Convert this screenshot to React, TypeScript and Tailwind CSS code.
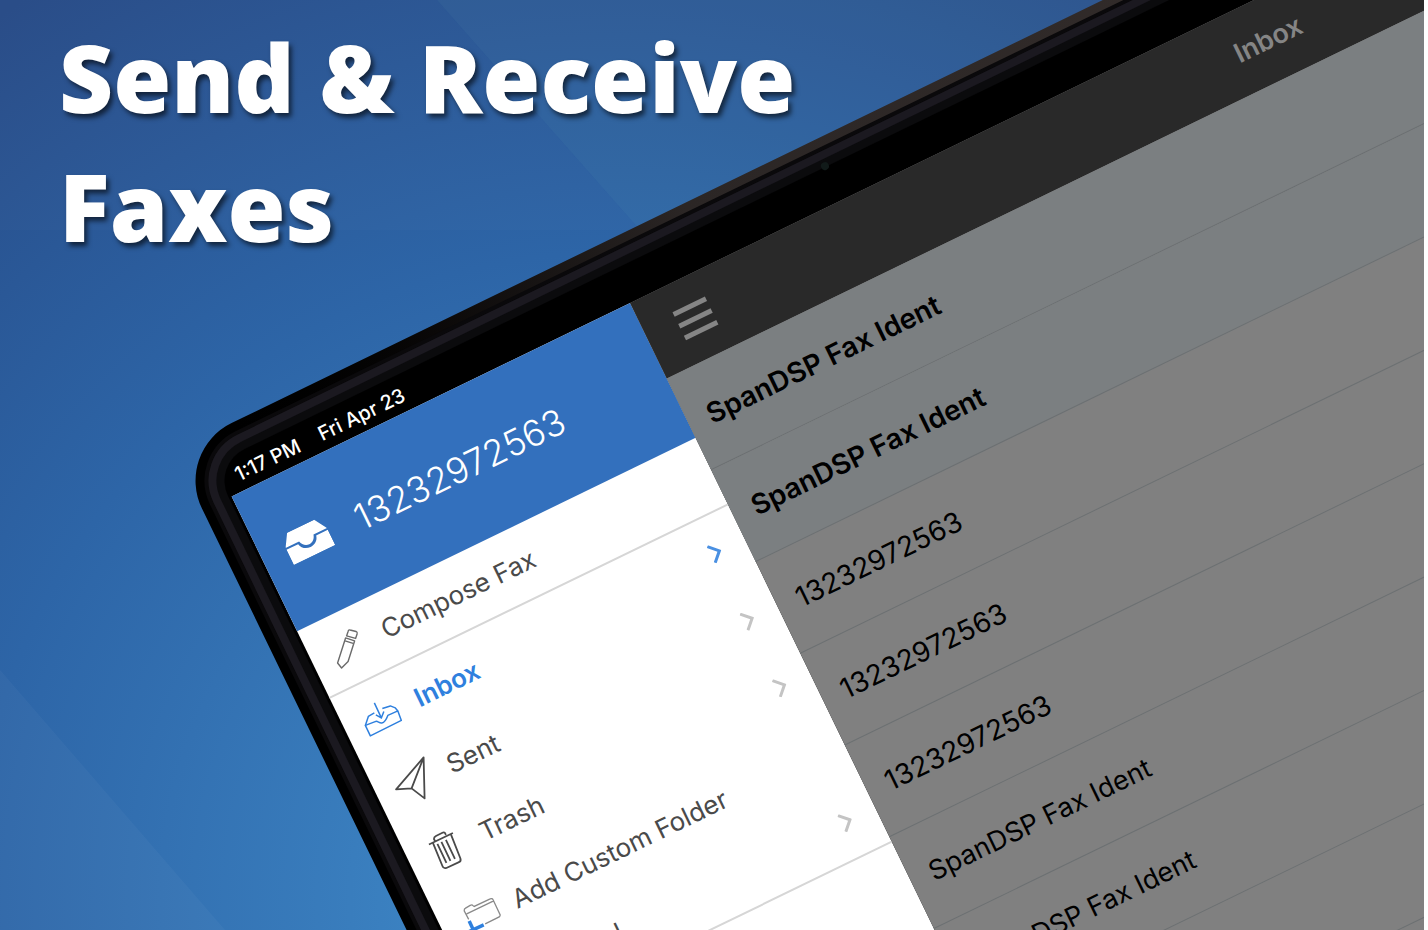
import type { ReactNode } from "react";

const folders = [
  { label: "Inbox", icon: <InboxIcon />, chevron: true, active: true },
  { label: "Sent", icon: <SentIcon />, chevron: true },
  { label: "Trash", icon: <TrashIcon />, chevron: true },
  { label: "Add Custom Folder", icon: <FolderIcon /> },
  { label: "School", icon: <FolderIcon />, chevron: true },
];

const faxes = [
  { from: "SpanDSP Fax Ident", style: "bg-[#7b7f81] text-[28px] font-semibold" },
  { from: "SpanDSP Fax Ident", style: "bg-[#7b7f81] text-[28px] font-semibold" },
  { from: "13232972563", style: "text-[28px]" },
  { from: "13232972563", style: "text-[28px]" },
  { from: "13232972563", style: "text-[28px]" },
  { from: "SpanDSP Fax Ident", style: "text-[27px]" },
  { from: "SpanDSP Fax Ident", style: "text-[27px]" },
  { from: "", style: "" },
  { from: "", style: "" },
];

function TrayIcon() {
  return (
    <svg viewBox="0 0 46 32" className="mb-1 h-8 w-[46px] shrink-0 fill-white">
      <path d="M8 0h30l8 13H31c-1 4-4 7-8 7s-7-3-8-7H0z" />
      <path d="M0 15h13c1 5 5 8 10 8s9-3 10-8h13v17H0z" />
    </svg>
  );
}

// The menu icons are drawn upright to the page, so each one undoes the tablet's tilt.
function PencilIcon() {
  return (
    <svg viewBox="0 0 40 40" className="size-10 shrink-0 rotate-[25.9deg] overflow-visible fill-none stroke-[#6b6b6b] stroke-[1.4]">
      <path
        d="M23.500 1.500l6 1.500q1.500.5 1 2.500l-1.500 4.500-9-2.500 1.500-4.500q.5-2 2-1.500zM19 9.500l9 3-6.500 20.500-6.500 6.500-4-5z"
        strokeLinejoin="round"
      />
      <path d="M18.500 12.500l8 2.500" />
    </svg>
  );
}

function InboxIcon() {
  return (
    <svg viewBox="0 0 40 40" className="size-10 shrink-0 rotate-[25.9deg] overflow-visible fill-none stroke-[#2f80de] stroke-[1.5]">
      <path d="M6 29.500L11 40l31-15.500-3.500-9.500-10 4.500c-1.500 4-3 7-6 7.500-2.500.5-4-2-6-1.500z" strokeLinejoin="round" />
      <path d="M6 29.500l3-9 6-3.500M23 12.500l8-2.500 5 2 2.500 3" strokeLinejoin="round" />
      <path d="M15 7l7 15M16.500 19l5.500 3 2.500-6.500" />
    </svg>
  );
}

function SentIcon() {
  return (
    <svg viewBox="0 0 40 40" className="size-10 shrink-0 rotate-[25.9deg] overflow-visible fill-none stroke-[#4a4a4a] stroke-[1.8]">
      <path d="M31.500-6L4 26l15.500-1 13 10zL19.500 25" strokeLinejoin="round" />
    </svg>
  );
}

function TrashIcon() {
  return (
    <svg viewBox="0 0 40 40" className="size-10 shrink-0 rotate-[25.9deg] overflow-visible fill-none stroke-[#4a4a4a] stroke-[1.8]">
      <path d="M4.500 14.500L28.500 3M10.500 11l-1-2q0-2 2-3l6-3q2-1 3 0l1 2" />
      <path d="M8.500 13l9.500 23q1 3 4 2l12-5.500q3-1 2-4L26.500 4.500M13 14l9 19M17 12l9 19M21.500 10l9 19" />
    </svg>
  );
}

function FolderIcon() {
  return (
    <svg viewBox="0 0 40 40" className="size-10 shrink-0 rotate-[25.9deg] overflow-visible fill-none stroke-[#8a8a8a] stroke-[1.3]">
      <path d="M11.500 22L7 13.500q0-2 1-2.500l5-3q2-1 2.500 0l1.500 1L33 1.500q2-1 3 1l7 15q0 1-1 2L28 26.500M9.500 16.500l27-13" />
      <path d="M12 23.500l6 13M26.500 27.500L8 36" className="stroke-[#2f80de] stroke-[3.500]" />
    </svg>
  );
}

function Chevron({ active }: { active?: boolean }) {
  return (
    <svg viewBox="0 0 12 20" className={`h-5 w-3 fill-none stroke-[3] ${active ? "stroke-[#4a90e2]" : "stroke-[#c4c4c4]"}`}>
      <path d="M1 1l9 9-9 9" />
    </svg>
  );
}

function MenuRow({ icon, label, active, chevron }: { icon: ReactNode; label: string; active?: boolean; chevron?: boolean }) {
  return (
    <button
      className={`flex w-full flex-1 items-center gap-5 pr-[26px] pl-[17px] text-left text-[26px] ${active ? "font-semibold text-[#2f80de]" : "text-[#4a4a4a]"}`}
    >
      {icon}
      <span className="grow">{label}</span>
      {chevron && <Chevron active={active} />}
    </button>
  );
}

function Sidebar() {
  return (
    <nav className="w-[443px] shrink-0 bg-white">
      <div className="flex h-[150px] items-center gap-[30px] bg-[#3370bd] pl-[26px]">
        <TrayIcon />
        <span className="text-4xl font-light text-white">13232972563</span>
      </div>
      <div className="flex h-[75px] border-b-2 border-[#d6d6d6]">
        <MenuRow icon={<PencilIcon />} label="Compose Fax" />
      </div>
      <div className="flex h-[375px] flex-col border-b-2 border-[#d6d6d6]">
        {folders.map((folder) => (
          <MenuRow key={folder.label} {...folder} />
        ))}
      </div>
    </nav>
  );
}

function FaxList() {
  return (
    <main className="w-[1378px] shrink-0 bg-[#808080]">
      <header className="flex h-[84px] items-center bg-[#292929] px-[34px]">
        <button aria-label="Menu" className="flex w-9 flex-col gap-2">
          <span className="h-[5px] bg-[#858585]" />
          <span className="h-[5px] bg-[#858585]" />
          <span className="h-[5px] bg-[#858585]" />
        </button>
        <h2 className="grow pr-9 text-center text-[27px] font-semibold text-[#858585]">Inbox</h2>
      </header>
      <ul className="text-black">
        {faxes.map((fax, i) => (
          <li key={i} className={`flex h-[102px] items-center border-b border-[#6c7072] pl-[21px] ${fax.style}`}>
            {fax.from}
          </li>
        ))}
      </ul>
    </main>
  );
}

function Tablet() {
  return (
    <div className="absolute top-[451px] left-[174px] w-[1885px] origin-top-left -rotate-[25.9deg] rounded-[64px] bg-linear-to-r from-black via-[#2b2625] via-30% to-[#3a3230] p-[9px] font-[Inter,sans-serif]">
      <div className="rounded-[55px] border-4 border-[#0a090b] bg-[#0a090b]">
        <div className="rounded-[51px] border-8 border-[#1b1920] bg-[#1b1920]">
          <div className="rounded-[43px] border-8 border-[#0b0b0d] bg-[#0b0b0d]">
            <div className="rounded-[35px] bg-black">
              <div className="flex h-[37px] items-end gap-[22px] pb-[3px] pl-4 text-xl font-medium text-white">
                <span>1:17 PM</span>
                <span>Fri Apr 23</span>
              </div>
              <div className="flex pb-9 pl-[3px]">
                <Sidebar />
                <FaxList />
              </div>
            </div>
          </div>
        </div>
      </div>
      <span className="absolute top-6 left-[706px] size-2 rounded-full bg-[#111a19]" />
    </div>
  );
}

function Backdrop() {
  return (
    <svg viewBox="0 0 1424 930" preserveAspectRatio="none" className="absolute inset-0 size-full">
      <defs>
        <radialGradient id="glow" gradientUnits="userSpaceOnUse" cx="620" cy="900" r="1080">
          <stop offset="0" stopColor="#4290cf" />
          <stop offset="0.25" stopColor="#397dbd" />
          <stop offset="0.6" stopColor="#2d65a7" />
          <stop offset="1" stopColor="#274b87" />
        </radialGradient>
      </defs>
      <rect width="1424" height="930" fill="url(#glow)" />
      <path d="M437 0L640 230H1424V0z" fill="#8fc0c0" opacity="0.07" />
      <path d="M0 230H640L437 0H0z" fill="#fff" opacity="0.015" />
      <path d="M0 670L225 930H0z" fill="#fff" opacity="0.03" />
    </svg>
  );
}

export default function App() {
  return (
    <div className="min-h-screen bg-white pr-1">
      <section className="relative min-h-screen overflow-hidden bg-[#2d65a7]">
        <Backdrop />
        <Tablet />
        <h1 className="relative w-[800px] pt-[13px] pl-[59px] font-['Open_Sans',sans-serif] text-[94px] leading-[129px] font-extrabold text-white [text-shadow:3px_4px_5px_rgba(0,0,0,0.6)]">
          Send &amp; Receive Faxes
        </h1>
      </section>
    </div>
  );
}
